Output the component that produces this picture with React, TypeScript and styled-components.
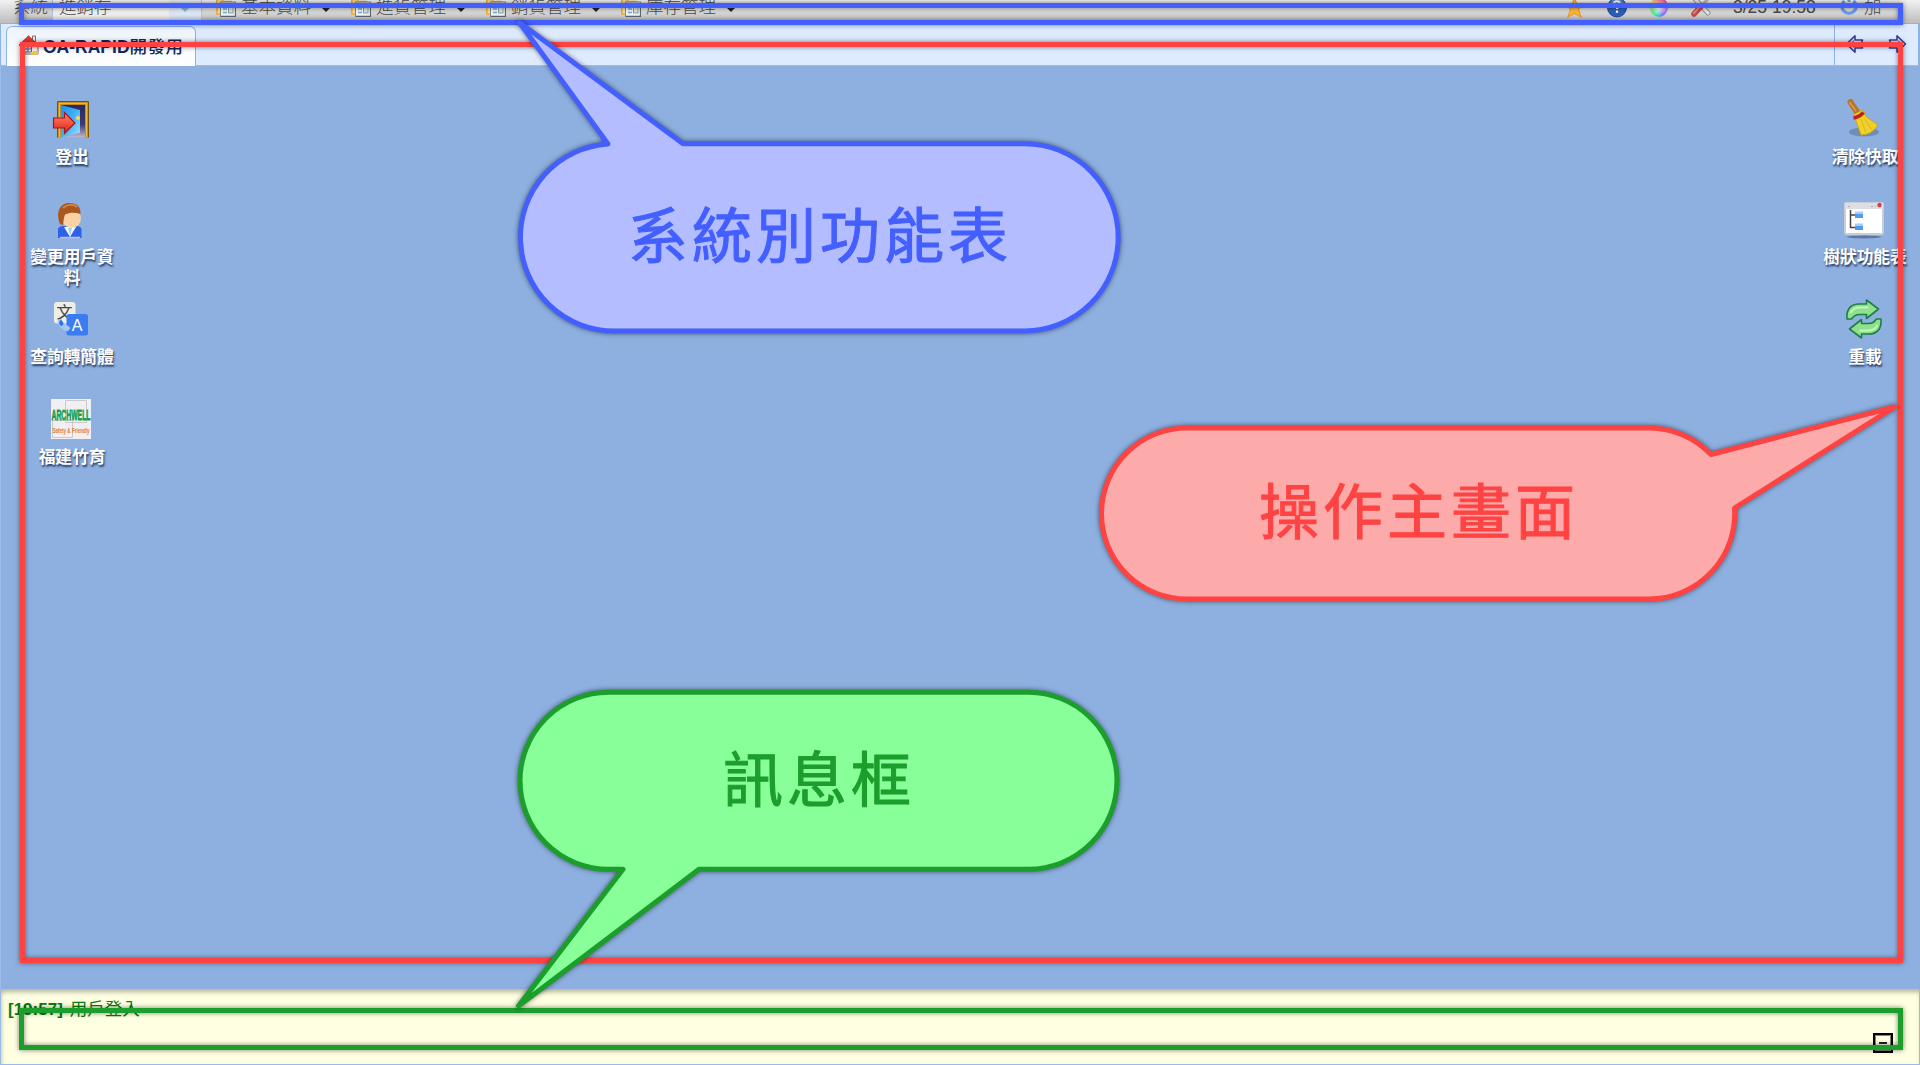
import React from 'react';
import styled, { createGlobalStyle } from 'styled-components';

const FONT = '"Liberation Sans", "Noto Sans CJK TC", sans-serif';

const GlobalStyle = createGlobalStyle`
  html, body { margin: 0; padding: 0; overflow: hidden; }
  *, *::before, *::after { box-sizing: border-box; }
`;

const Screen = styled.div`
  position: relative;
  width: 1920px;
  height: 1065px;
  overflow: hidden;
  display: flex;
  flex-direction: column;
  background: #8db0e0;
  font-family: ${FONT};
  font-size: 17.5px;
`;

const Toolbar = styled.header`
  flex: none;
  height: 23px;
  overflow: hidden;
  display: flex;
  align-items: flex-end;
  background: linear-gradient(#f2f2f2, #bdbdbd);
  color: #4a4a4a;
  padding-left: 13px;
`;

const ToolGroup = styled.div`
  display: flex;
  align-items: center;
  height: 32px;
`;

const ToolText = styled.span<{ $width?: number }>`
  display: block;
  flex: none;
  width: ${(p) => (p.$width ? `${p.$width}px` : 'auto')};
  font-weight: 300;
  line-height: 26px;
  white-space: nowrap;
`;

const Combo = styled.div`
  flex: none;
  display: flex;
  width: 150px;
  height: 32px;
  border: 1px solid #a9c5ee;
  border-width: 0 1px;
  background: linear-gradient(#ffffff, #e6e6e6);
  margin-right: 14px;
`;

const ComboValue = styled.div`
  flex: 1;
  padding: 3px 0 0 6px;
  line-height: 26px;
  font-weight: 300;
`;

const ComboTrigger = styled.div`
  width: 32px;
  display: flex;
  align-items: flex-end;
  justify-content: center;
  padding-bottom: 11px;
  background: linear-gradient(#f0f5fc, #d3dfef);
`;

const MenuItem = styled.div`
  flex: none;
  width: 135px;
  display: flex;
  align-items: center;
`;

const MenuLabel = styled(ToolText)`
  margin: 0 11px 0 5px;
  width: 70px;
`;

const Caret = styled.i<{ $color: string; $size: number; $drop?: number }>`
  width: 0;
  height: 0;
  border: ${(p) => p.$size}px solid transparent;
  border-top-color: ${(p) => p.$color};
  border-bottom: 0;
  margin-top: ${(p) => p.$drop ?? 0}px;
`;

const Status = styled(ToolGroup)`
  width: 355px;
  margin-left: auto;
`;

const StatusIcon = styled.div<{ $width: number }>`
  width: ${(p) => p.$width}px;
  height: 20px;
  flex: none;
`;

const TabStrip = styled.nav`
  flex: none;
  height: 43px;
  display: flex;
  justify-content: space-between;
  border: 1px solid #8db2e3;
  border-bottom-color: #9bbdec;
  border-right-width: 2px;
  background: #deebff;
  padding-left: 5px;
`;

const Tab = styled.div`
  width: 190px;
  height: 40px;
  margin-top: 2px;
  padding: 0 0 3px 12px;
  display: flex;
  align-items: center;
  gap: 4px;
  border: 1px solid #8db2e3;
  border-bottom: 0;
  border-radius: 6px 6px 0 0;
  background: linear-gradient(#edf3fd, #ffffff);
  color: #14295c;
  white-space: nowrap;
`;

const TabTitle = styled.span`
  font-weight: bold;
  & > span { font-weight: 500; letter-spacing: 0.5px; }
`;

const TabArrows = styled.div`
  width: 84px;
  display: flex;
  padding: 10px 0 0 10px;
  gap: 22px;
  border-left: 1px solid #8db2e3;
`;

const Desktop = styled.main`
  flex: 1;
  display: flex;
  justify-content: space-between;
  border-left: 1px solid #9bbdec;
  padding: 33px 9px 0 25px;
`;

const ShortcutColumn = styled.div`
  width: 92px;
  display: flex;
  flex-direction: column;
`;

const Shortcut = styled.div`
  height: 100px;
  display: flex;
  flex-direction: column;
  align-items: center;
  gap: 8px;
`;

const ShortcutIcon = styled.div`
  width: 42px;
  height: 40px;
  flex: none;
`;

const ShortcutLabel = styled.div`
  width: 90px;
  text-align: center;
  font-size: 16.7px;
  font-weight: bold;
  line-height: 21px;
  color: #fff;
  text-shadow: 1px 2px 2px rgba(20, 35, 70, 0.85);
`;

const MessageBar = styled.footer`
  flex: none;
  height: 76px;
  display: flex;
  justify-content: space-between;
  padding: 8px 26px 0 7px;
  border: 1px solid #99bbe8;
  border-top: 0;
  background: #ffffe1;
  box-shadow: inset 1px 4px 5px -1px rgba(0, 0, 0, 0.3);
  color: #067d13;
`;

const Message = styled.p`
  margin: 0;
  line-height: 25px;
  & > b { font-size: 17px; margin-right: 2px; }
`;

const Collapse = styled.div`
  width: 20px;
  height: 20px;
  margin-top: 36px;
  display: grid;
  place-items: center;
  border: 2px solid #000;
  box-shadow: inset 0 0 0 1px #85857a;
  &::after { content: ''; width: 8px; height: 2px; background: #222; }
`;

/* Annotation layer */
const Frame = styled.div<{ $x: number; $y: number; $w: number; $h: number; $color: string }>`
  position: absolute;
  left: ${(p) => p.$x}px;
  top: ${(p) => p.$y}px;
  width: ${(p) => p.$w}px;
  height: ${(p) => p.$h}px;
  border: 5px solid ${(p) => p.$color};
  box-shadow: 0 0 5px rgba(0, 0, 0, 0.5), inset 0 0 5px rgba(0, 0, 0, 0.5);
`;

const CalloutLayer = styled.svg`
  position: absolute;
  left: 0;
  top: 0;
  filter: drop-shadow(0 0 2.5px rgba(0, 0, 0, 0.55));
  stroke-width: 5;
  stroke-linejoin: round;
`;

const CalloutText = styled.div<{ $x: number; $y: number; $w: number; $h: number; $color: string }>`
  position: absolute;
  left: ${(p) => p.$x}px;
  top: ${(p) => p.$y}px;
  width: ${(p) => p.$w}px;
  height: ${(p) => p.$h}px;
  display: flex;
  align-items: center;
  justify-content: center;
  color: ${(p) => p.$color};
  font-family: "Noto Sans CJK TC", sans-serif;
  font-size: 60px;
  font-weight: 400;
  letter-spacing: 4px;
  line-height: 60px;
  -webkit-text-stroke: 1px ${(p) => p.$color};
`;

const BLUE = '#435fff';
const RED = '#ff4343';
const GREEN = '#1c9e2c';

const FormIcon = () => (
  <svg width="20" height="20" viewBox="0 0 20 20">
    <path d="M.8 17V2.500h5l1.500 2H15V17z" fill="#f8dda0" stroke="#efa83a" strokeWidth="1.500" />
    <rect x="4.500" y="5" width="15" height="14.500" fill="#eef4f4" stroke="#7b8c94" />
    <path d="M19.500 6v13.500H5" fill="none" stroke="#5a6870" strokeWidth="1.300" />
    <path d="M7 8.500h4M7 12h4M7 15.500h4" stroke="#77a9c8" strokeWidth="1.600" />
    <rect x="12.500" y="8.500" width="4.500" height="7.500" fill="#d5e6d0" stroke="#7fa2b2" />
  </svg>
);

const StarIcon = () => (
  <svg width="19" height="21" viewBox="0 0 18 20">
    <path d="M9 1l2.400 6.200 6.200.3-4.900 4.100 2.600 7.400L9 15.500 2.700 19l2.600-7.400L.4 7.500l6.200-.3z" fill="#fdbb34" stroke="#e9952a" />
  </svg>
);

const HelpIcon = () => (
  <svg width="20" height="21" viewBox="0 0 20 20">
    <circle cx="10" cy="10" r="9.500" fill="#2d5fb8" stroke="#204a96" />
    <ellipse cx="10" cy="6" rx="7" ry="4.500" fill="#7ea6e4" opacity=".6" />
    <path d="M7 6.200C7.200 2.800 13 3 12.800 6.300c-.1 2.200-2.800 2.300-2.800 5.200M10 13v2.200" fill="none" stroke="#fff" strokeWidth="2.200" />
  </svg>
);

const Wheel = styled.div`
  width: 18px;
  height: 20px;
  border-radius: 50%;
  background: radial-gradient(circle, #fff 10%, rgba(255, 255, 255, 0) 65%),
    conic-gradient(#f46, #b6f 110deg, #76f 150deg, #3db 190deg, #5e6 240deg, #fe5 300deg, #f46);
`;

const ToolsIcon = () => (
  <svg width="20" height="20" viewBox="0 0 20 20">
    <path d="M3 1l14 15" stroke="#8d8d8d" strokeWidth="5" strokeLinecap="round" />
    <path d="M3 1l14 15" stroke="#e4e4e4" strokeWidth="3.200" strokeLinecap="round" />
    <path d="M18 1l-7 7" stroke="#b5b5b5" strokeWidth="3" />
    <path d="M10 9.500l-7 7.500" stroke="#c04a4a" strokeWidth="5.500" strokeLinecap="round" />
    <path d="M9 9.500l-6 6.500" stroke="#e88c8c" strokeWidth="1.800" strokeLinecap="round" />
  </svg>
);

const PowerIcon = () => (
  <svg width="18" height="20" viewBox="0 0 18 20">
    <path d="M4.500 4a7 7 0 1 0 9 0" fill="none" stroke="#6d9bea" strokeWidth="3.400" />
    <path d="M9 0v5" stroke="#6d9bea" strokeWidth="3" />
  </svg>
);

const HouseIcon = () => (
  <svg width="20" height="20" viewBox="0 0 20 20">
    <path d="M13.500 1h3v6h-3z" fill="#efeae5" stroke="#8b6a60" />
    <path d="M3 10v9h16v-9l-8-7z" fill="#f4efe3" stroke="#7a6b58" />
    <path d="M0 10L9.500.8 19 10l-2 1-7.500-4L2 11z" fill="#e63b34" stroke="#b22828" strokeWidth=".7" />
    <path d="M5.500 11h7v6h-7zM9 11v6M5.500 14h7" fill="#dfe8f6" stroke="#5a6378" />
    <path d="M14 16h5v3.500h-7z" fill="#edc63a" />
  </svg>
);

const ArrowIcon = ({ flip }: { flip?: boolean }) => (
  <svg width="20" height="20" viewBox="0 0 20 20">
    <g transform={flip ? 'translate(20 0) scale(-1 1)' : undefined}>
      <path d="M1.500 10L10 1.800V6h7.500L16 10l1.500 4H10v4.200z" fill="#eaf2ff" stroke="#3a3f9c" strokeWidth="1.600" strokeLinejoin="round" />
      <path d="M4.500 10L9 5.500v9z" fill="#49a6de" />
    </g>
  </svg>
);

const DoorIcon = () => (
  <svg width="40" height="40" viewBox="0 0 40 40">
    <defs>
      <linearGradient id="door" x2="1" y2="1"><stop stopColor="#1e8df0" /><stop offset=".5" stopColor="#3fb2f8" /><stop offset="1" stopColor="#9fe0ff" /></linearGradient>
      <linearGradient id="night" x2="0" y2="1"><stop stopColor="#28285e" /><stop offset=".6" stopColor="#3d3a78" /><stop offset="1" stopColor="#c5b9cc" /></linearGradient>
      <linearGradient id="exit" x2="0" y2="1"><stop stopColor="#ff8a70" /><stop offset="1" stopColor="#e21c12" /></linearGradient>
    </defs>
    <path d="M6.500 38.500V2.500h31v36" fill="#c48a18" stroke="#76500e" />
    <path d="M8.500 38V4.500h27V38" fill="none" stroke="#e9bd3c" strokeWidth="1.200" />
    <path d="M10 6h24v32.500H10z" fill="url(#night)" />
    <path d="M10 6l19 5v23l-19 4.500z" fill="url(#door)" />
    <circle cx="27" cy="19" r="2" fill="#ffd83a" />
    <path d="M2.500 19h11v-5.500L24 24 13.500 34.500V29h-11z" fill="url(#exit)" stroke="#a91518" strokeWidth="1.200" />
  </svg>
);

const UserIcon = () => (
  <svg width="40" height="40" viewBox="0 0 40 40">
    <path d="M7 39V30q1-3 5-3h13q5 0 5.500 3v9z" fill="#2d62e8" />
    <path d="M13 28l6 10L25 28z" fill="#f4f8ff" />
    <path d="M17 29l2 8 2-8z" fill="#a6cdf8" />
    <ellipse cx="20.500" cy="19.500" rx="9.500" ry="9.500" fill="#fad2a4" />
    <path d="M9 25C4 12 10 3.500 19 4c8 .5 11 5 10.500 11-5-1.500-10-2-15.500.5C12.500 19 12.500 23 12 26z" fill="#a9571c" />
    <path d="M12 9c4-4 10-4 14-1" stroke="#cf8442" strokeWidth="2" fill="none" />
    <path d="M9 38.500h20" stroke="#c9b9ef" strokeWidth="1.500" />
  </svg>
);

const IconGlyph = styled.text`
  font-family: ${FONT};
  text-anchor: middle;
`;

const TranslateIcon = () => (
  <svg width="40" height="40" viewBox="0 0 40 40">
    <rect x="3" y="3" width="21.500" height="21.500" rx="3" fill="#eeeee6" />
    <IconGlyph x="13.500" y="18.500" fontSize="16" fontWeight="400" fill="#444">文</IconGlyph>
    <rect x="15.500" y="15" width="21.500" height="21.500" rx="2.500" fill="#3a7df2" />
    <IconGlyph x="26" y="31.500" fontSize="16" fill="#fff">A</IconGlyph>
    <path d="M8 20q-3 3 0 6 4 6 9 6l2.500-3-5-4h-3q-1-3-1-5z" fill="#a9c5f7" />
    <path d="M10 20.500q-4 4 .5 6.500 2-.5 2-3z" fill="#2f70e8" />
  </svg>
);

const LogoIcon = () => (
  <svg width="40" height="40" viewBox="0 0 40 40">
    <path d="M0 0h40v40H0z" fill="#f1eff2" />
    <path d="M14.500 1.500h21v22h-21zM1.500 21.500h20v17h-20z" fill="none" stroke="#cbc9cc" />
    <IconGlyph x="20" y="20.500" fontSize="14.500" fontWeight="bold" fill="#16a053" stroke="#16a053" strokeWidth=".8" textLength="39" lengthAdjust="spacingAndGlyphs">ARCHWELL</IconGlyph>
    <IconGlyph x="20" y="34" fontSize="6.500" fontWeight="bold" fill="#e27a36" textLength="37" lengthAdjust="spacingAndGlyphs">Safety &amp; Friendly</IconGlyph>
  </svg>
);

const BroomIcon = () => (
  <svg width="40" height="40" viewBox="0 0 40 40">
    <ellipse cx="20" cy="33" rx="15" ry="4.500" fill="#53698e" opacity=".5" />
    <path d="M6.500 3l6.500 10" stroke="#b8752c" strokeWidth="6" strokeLinecap="round" />
    <path d="M5.500 3l6.500 9" stroke="#d99a4a" strokeWidth="1.500" />
    <path d="M10 15.500l9-5 3 7 12 8.500q-6 10-17 10-3-8-5-14z" fill="#f0d02a" stroke="#c79b16" strokeWidth=".8" />
    <path d="M17 20l5 14M20 19l8 12" stroke="#dcb81e" />
    <path d="M9.500 19q6-1 10-5.500" stroke="#c01f1f" strokeWidth="3.500" fill="none" />
  </svg>
);

const TreeIcon = () => (
  <svg width="40" height="40" viewBox="0 0 40 40">
    <ellipse cx="20" cy="38" rx="17" ry="1.500" fill="#46618f" opacity=".7" />
    <rect x="1" y="4" width="38" height="31" rx="1" fill="#fff" stroke="#c9cdd6" strokeWidth="2" />
    <path d="M1 4h38v6H1z" fill="#dcdee4" />
    <path d="M4 7.500h2M27 7.500h2M31 7.500h1" stroke="#a9adb7" />
    <circle cx="35.500" cy="6" r="2.200" fill="#d84040" />
    <path d="M6.500 11v17.500H12M6.500 16H12" fill="none" stroke="#444" strokeWidth="1.500" />
    <path d="M11 13h8v6h-8zM11 25h8v6h-8z" fill="#549ae8" />
    <path d="M11 12.500h8v2.500h-8zM11 24.500h8V27h-8z" fill="#a4cdf8" />
  </svg>
);

const ReloadIcon = () => (
  <svg width="40" height="40" viewBox="0 0 40 40">
    <g fill="#8fe08a" stroke="#1f7d49" strokeWidth="1.600" strokeLinejoin="round">
      <path d="M3 20C2 9 8 5 15 5h7.500V1L34.500 10 22.500 19.500V15.500H16q-5-.5-8.500 4.500z" />
      <path d="M37 20C38 31 32 35 25 35h-7.500v4L5.500 30 17.500 20.500v4H24q5 .5 8.500-4.500z" />
    </g>
    <path d="M6.500 14q3-5.500 9-5.500h9M33.500 26q-3 5.500-9 5.500h-9" fill="none" stroke="#c6f6bd" strokeWidth="1.800" />
  </svg>
);

const menus = ['基本資料', '進貨管理', '銷貨管理', '庫存管理'];

const leftShortcuts = [
  { label: '登出', icon: <DoorIcon /> },
  { label: '變更用戶資料', icon: <UserIcon /> },
  { label: '查詢轉簡體', icon: <TranslateIcon /> },
  { label: '福建竹育', icon: <LogoIcon /> },
];

const rightShortcuts = [
  { label: '清除快取', icon: <BroomIcon /> },
  { label: '樹狀功能表', icon: <TreeIcon /> },
  { label: '重載', icon: <ReloadIcon /> },
];

const Shortcuts = ({ items }: { items: typeof leftShortcuts }) => (
  <ShortcutColumn>
    {items.map((s) => (
      <Shortcut key={s.label}>
        <ShortcutIcon>{s.icon}</ShortcutIcon>
        <ShortcutLabel>{s.label}</ShortcutLabel>
      </Shortcut>
    ))}
  </ShortcutColumn>
);

export default function App() {
  return (
    <Screen>
      <GlobalStyle />
      <Toolbar>
        <ToolGroup>
          <ToolText $width={39}>系統</ToolText>
          <Combo>
            <ComboValue>進銷存</ComboValue>
            <ComboTrigger><Caret $color="#7fb4ea" $size={5} /></ComboTrigger>
          </Combo>
          {menus.map((m) => (
            <MenuItem key={m}>
              <FormIcon />
              <MenuLabel>{m}</MenuLabel>
              <Caret $color="#222" $size={4} $drop={5} />
            </MenuItem>
          ))}
        </ToolGroup>
        <Status>
          <StatusIcon $width={42}><StarIcon /></StatusIcon>
          <StatusIcon $width={43}><HelpIcon /></StatusIcon>
          <StatusIcon $width={41}><Wheel /></StatusIcon>
          <StatusIcon $width={42}><ToolsIcon /></StatusIcon>
          <ToolText $width={107}>3/25 19:58</ToolText>
          <StatusIcon $width={24}><PowerIcon /></StatusIcon>
          <ToolText>加</ToolText>
        </Status>
      </Toolbar>
      <TabStrip>
        <Tab>
          <HouseIcon />
          <TabTitle>OA-RAPID<span>開發用</span></TabTitle>
        </Tab>
        <TabArrows>
          <ArrowIcon />
          <ArrowIcon flip />
        </TabArrows>
      </TabStrip>
      <Desktop>
        <Shortcuts items={leftShortcuts} />
        <Shortcuts items={rightShortcuts} />
      </Desktop>
      <MessageBar>
        <Message><b>[19:57]</b> 用戶登入</Message>
        <Collapse />
      </MessageBar>

      <Frame $x={20} $y={42} $w={1883} $h={921} $color={RED} />
      <Frame $x={19} $y={3} $w={1884} $h={22} $color={BLUE} />
      <Frame $x={19} $y={1008} $w={1884} $h={42} $color={GREEN} />
      <CalloutLayer width="1920" height="1065" viewBox="0 0 1920 1065">
        <path d="M608 143.900L519.500 22.500 683 143.700H1024.500A93.650 93.650 0 0 1 1024.500 331H614.500A93.650 93.650 0 0 1 608 143.900Z" fill="#b3bdff" stroke={BLUE} />
        <path d="M1187 428H1649A85.500 85.500 0 0 1 1711 454.500L1894.500 407 1734.500 508A85.500 85.500 0 0 1 1649 599H1187A85.500 85.500 0 0 1 1187 428Z" fill="#fcaaaa" stroke={RED} />
        <path d="M608.500 692.300H1028.500A88.500 88.500 0 0 1 1028.500 869.300H699L518.500 1006 623 869.300H608.500A88.500 88.500 0 0 1 608.500 692.300Z" fill="#88ff99" stroke={GREEN} />
      </CalloutLayer>
      <CalloutText $x={520} $y={138} $w={600} $h={187} $color={BLUE}>系統別功能表</CalloutText>
      <CalloutText $x={1101} $y={422} $w={636} $h={171} $color={RED}>操作主畫面</CalloutText>
      <CalloutText $x={519} $y={687} $w={600} $h={177} $color={GREEN}>訊息框</CalloutText>
    </Screen>
  );
}
